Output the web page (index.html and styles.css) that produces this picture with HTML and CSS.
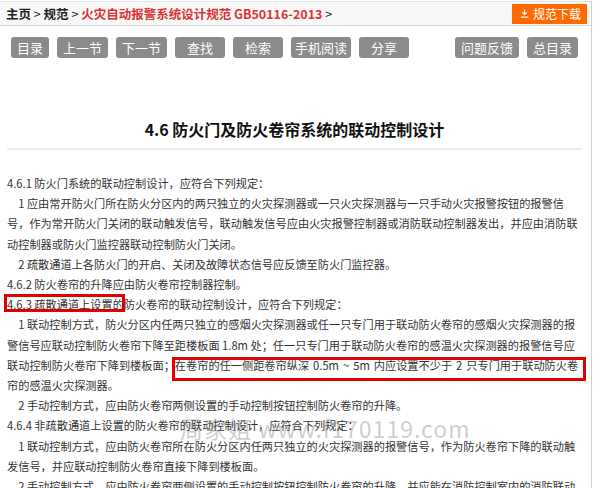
FILE: index.html
```html
<!DOCTYPE html>
<html>
  <head>
    <meta charset="UTF-8">
    <title>4.6 防火门及防火卷帘系统的联动控制设计</title>
    <link rel="stylesheet" href="styles.css">
  </head>
  <body>
    <div class="page">
      <div class="crumb">
        <div class="path"><b>主页</b> &gt; <b>规范</b> &gt; <b class="std">火灾自动报警系统设计规范 GB50116-2013</b> &gt;</div>
        <a class="download" href="#">
          <svg width="9" height="9" viewBox="0 0 9 9"><path d="M4.5 0.5v5M2.3 3.4l2.2 2.2 2.2-2.2M0.8 8.2h7.4" fill="none" stroke="#fff" stroke-width="1.2"/></svg>
          规范下载
        </a>
      </div>
      <div class="tools">
        <a class="btn" href="#">目录</a>
        <a class="btn" href="#">上一节</a>
        <a class="btn" href="#">下一节</a>
        <a class="btn wide" href="#">查找</a>
        <a class="btn wide" href="#">检索</a>
        <a class="btn tight" href="#">手机阅读</a>
        <a class="btn wide" href="#">分享</a>
        <a class="btn push" href="#">问题反馈</a>
        <a class="btn" href="#">总目录</a>
      </div>
      <h2 class="title">4.6 防火门及防火卷帘系统的联动控制设计</h2>
      <div class="content">
        <p>4.6.1 防火门系统的联动控制设计，应符合下列规定：</p>
        <p class="ind">1 应由常开防火门所在防火分区内的两只独立的火灾探测器或一只火灾探测器与一只手动火灾报警按钮的报警信号，作为常开防火门关闭的联动触发信号，联动触发信号应由火灾报警控制器或消防联动控制器发出，并应由消防联动控制器或防火门监控器联动控制防火门关闭。</p>
        <p class="ind">2 疏散通道上各防火门的开启、关闭及故障状态信号应反馈至防火门监控器。</p>
        <p>4.6.2 防火卷帘的升降应由防火卷帘控制器控制。</p>
        <p><span class="hl hl-a">4.6.3 疏散通道上设置的</span>防火卷帘的联动控制设计，应符合下列规定：</p>
        <p class="ind">1 联动控制方式，防火分区内任两只独立的感烟火灾探测器或任一只专门用于联动防火卷帘的感烟火灾探测器的报警信号应联动控制防火卷帘下降至距楼板面 1.8m 处；任一只专门用于联动防火卷帘的感温火灾探测器的报警信号应联动控制防火卷帘下降到楼板面；<span class="hl hl-b">在卷帘的任一侧距卷帘纵深 0.5m ~ 5m 内应设置不少于 2 只专门用于联动防火卷</span>帘的感温火灾探测器。</p>
        <p class="ind">2 手动控制方式，应由防火卷帘两侧设置的手动控制按钮控制防火卷帘的升降。</p>
        <p>4.6.4 非疏散通道上设置的防火卷帘的联动控制设计，应符合下列规定：</p>
        <p class="ind">1 联动控制方式，应由防火卷帘所在防火分区内任两只独立的火灾探测器的报警信号，作为防火卷帘下降的联动触发信号，并应联动控制防火卷帘直接下降到楼板面。</p>
        <p class="ind">2 手动控制方式，应由防火卷帘两侧设置的手动控制按钮控制防火卷帘的升降，并应能在消防控制室内的消防联动控制器上手动控制防火卷帘的降落。</p>
        <div class="watermark">周家姐 www.f170119.com</div>
      </div>
    </div>
  </body>
</html>
```

FILE: styles.css
```css
a { text-decoration: none }
body { background: #fff; color: #333; font-family: "Noto Sans CJK SC", "Microsoft YaHei", sans-serif; height: 488px; margin: 0; overflow: hidden }
p { margin: 0 }

.page { border-right: 1px solid #d2d2d2; min-height: 488px; width: 591px }

.crumb { align-items: center; background: #f8f8f8; border-bottom: 1px solid #d8d8d8; border-top: 1px solid #e4e4e4; display: flex; font-size: 12.5px; height: 23px; justify-content: space-between; margin-top: 1px; padding: 0 4px 0 6px }
.crumb .path { color: #222 }
.crumb .std { color: #dd3333 }
.download { align-items: center; background: #ff6a00; color: #fff; display: flex; font-size: 12px; gap: 4px; height: 20px; padding: 0 6px 0 8px }

.tools { display: flex; gap: 8px; margin-top: 11px; padding: 0 13px 0 11px }
.btn { background: #8b8b8b; border-radius: 3px; color: #fff; font-size: 13px; height: 21px; line-height: 21px; padding: 0 6px }
.btn.wide { padding: 0 12px }
.btn.tight { padding: 0 4px }
.btn.push { margin-left: auto }

.title { border-bottom: 2px solid #ececec; color: #111; font-size: 16px; font-weight: 700; line-height: 24px; margin: 59px 9px 0 7px; padding-bottom: 7px; text-align: center }

.content { font-size: 11.2px; line-height: 20.2px; margin-top: 23px; padding: 0 9px 0 7px; position: relative }
.ind { text-indent: 1em }

.hl { position: relative }
.hl::after { border: 3px solid #e00000; content: ""; position: absolute }
.hl-a::after { bottom: 0; left: -3px; right: -1px; top: -2px }
.hl-b { word-spacing: 1.5px }
.hl-b::after { bottom: -8px; left: -3px; right: -8px; top: 0 }

.watermark { color: rgba(110, 110, 110, 0.35); font-size: 23px; left: 180px; letter-spacing: 1px; line-height: 26px; position: absolute; top: 242px; white-space: nowrap }
```
